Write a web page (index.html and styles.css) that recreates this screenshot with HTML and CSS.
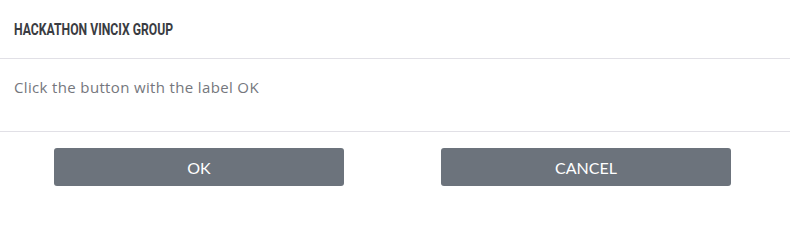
FILE: index.html
```html
<!DOCTYPE html>
<html lang="en">
<head>
<meta charset="utf-8">
<title>Hackathon Vincix Group</title>
<link rel="stylesheet" href="styles.css">
</head>
<body>
<div class="modal">
  <div class="modal-header">
    <h1 class="modal-title">HACKATHON VINCIX GROUP</h1>
  </div>
  <div class="modal-body">
    <p class="message">Click the button with the label OK</p>
  </div>
  <div class="modal-footer">
    <button class="btn">OK</button>
    <button class="btn">CANCEL</button>
  </div>
</div>
</body>
</html>
```
FILE: styles.css
```css
html, body {
  margin: 0;
  padding: 0;
  background: #ffffff;
}

.modal {
  width: 790px;
  display: flex;
  flex-direction: column;
}

.modal-header {
  height: 59px;
  display: flex;
  align-items: center;
  padding: 0 14px 1px;
  border-bottom: 1px solid #e1e0e6;
  box-sizing: border-box;
}

.modal-title {
  margin: 0;
  display: inline-block;
  font-family: "Roboto", "Liberation Sans", sans-serif;
  font-weight: 700;
  font-size: 17px;
  color: #3a3c42;
  letter-spacing: 0;
  transform: scaleX(0.717);
  transform-origin: left center;
  white-space: nowrap;
}

.modal-body {
  height: 73px;
  box-sizing: border-box;
  border-bottom: 1px solid #e1e0e6;
  display: flex;
  align-items: center;
  padding: 0 14px 16px;
}

.message {
  margin: 0;
  font-family: "Open Sans", "Lato", sans-serif;
  font-size: 15px;
  letter-spacing: 0.35px;
  color: #75777d;
}

.modal-footer {
  display: flex;
  gap: 97px;
  padding: 16px 59px 14px 54px;
}

.btn {
  width: 290px;
  height: 38px;
  border: none;
  border-radius: 3px;
  background: #6c737c;
  color: #ffffff;
  font-family: "Lato", "Open Sans", sans-serif;
  font-size: 16px;
  cursor: pointer;
}
```
